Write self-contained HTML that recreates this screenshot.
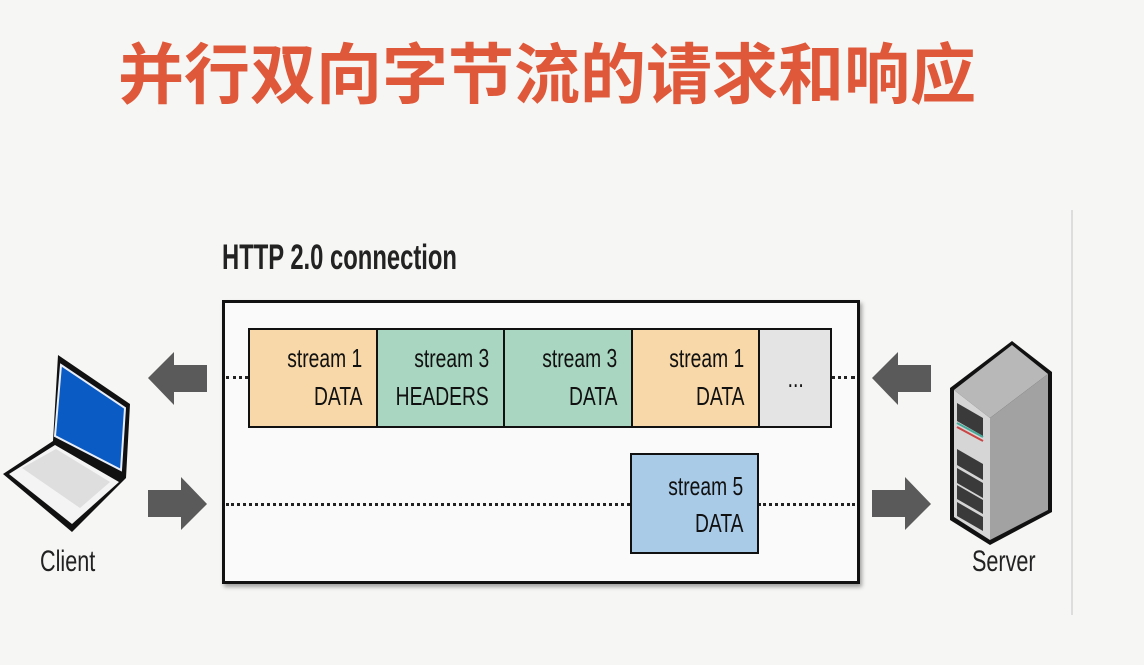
<!DOCTYPE html>
<html><head><meta charset="utf-8"><style>
body{margin:0;width:1144px;height:665px;background:#f6f6f4;position:relative;overflow:hidden;font-family:"Liberation Sans",sans-serif}
.t{position:absolute;left:118px;top:22px;white-space:nowrap;font:bold 66px "Liberation Sans","Noto Sans CJK SC",sans-serif;color:#e0583a}
.n{position:absolute;white-space:nowrap;transform-origin:0 0;color:#222}
.box{position:absolute;left:222px;top:300px;width:632px;height:278px;border:3px solid #111;box-shadow:2px 3px 4px rgba(0,0,0,.35);background:#fafafa}
.f{position:absolute;border:2px solid #111;box-sizing:border-box;font-size:26px;color:#111;line-height:37px}
.f span{position:absolute;right:14px;text-align:right;white-space:nowrap;transform-origin:100% 0;transform:scaleX(.74)}
.d{position:absolute;height:0;border-top:3px dotted #222}
</style></head><body>
<div class="t">并行双向字节流的请求和响应</div>
<div class="n" style="left:222px;top:238px;font-size:35px;font-weight:bold;transform:scaleX(.68)">HTTP 2.0 connection</div>
<div style="position:absolute;left:1071px;top:210px;width:2px;height:405px;background:#ddd"></div>
<div class="box"></div>
<div class="d" style="left:226px;top:376px;width:22px"></div>
<div class="d" style="left:831px;top:376px;width:24px"></div>
<div class="d" style="left:226px;top:503px;width:404px"></div>
<div class="d" style="left:758px;top:503px;width:97px"></div>
<div class="f" style="left:248px;top:328px;width:130px;height:100px;background:#f8d8a8"><span style="top:10px">stream 1</span><span style="top:48px">DATA</span></div>
<div class="f" style="left:376px;top:328px;width:129px;height:100px;background:#a9d6c1"><span style="top:10px">stream 3</span><span style="top:48px">HEADERS</span></div>
<div class="f" style="left:503px;top:328px;width:130px;height:100px;background:#a9d6c1"><span style="top:10px">stream 3</span><span style="top:48px">DATA</span></div>
<div class="f" style="left:631px;top:328px;width:129px;height:100px;background:#f8d8a8"><span style="top:10px">stream 1</span><span style="top:48px">DATA</span></div>
<div class="f" style="left:758px;top:328px;width:74px;height:100px;background:#e4e4e4"><span style="top:30px;right:26px">...</span></div>
<div class="f" style="left:630px;top:453px;width:129px;height:101px;background:#a9cbe8"><span style="top:13px">stream 5</span><span style="top:50px">DATA</span></div>
<div class="n" style="left:40px;top:545px;font-size:30px;transform:scaleX(.72)">Client</div>
<div class="n" style="left:972px;top:545px;font-size:30px;transform:scaleX(.72)">Server</div>
<svg width="1144" height="665" style="position:absolute;left:0;top:0">
<g fill="#5a5a5a">
<polygon points="207,365 174,365 174,352 148,378 174,405 174,392 207,392"/>
<polygon points="148,490 181,490 181,477 207,504 181,530 181,517 148,517"/>
<polygon points="931,365 898,365 898,352 872,378 898,405 898,392 931,392"/>
<polygon points="872,490 905,490 905,477 931,504 905,530 905,517 872,517"/>
</g>
<polygon points="3,474 53,441 58,355 130,404 126,478 72,532" fill="#111"/>
<polygon points="61,365 125,408 121,470 55,436" fill="#0a5bc4" stroke="#e8eefa" stroke-width="2"/>
<polygon points="9,474 55,445 119,482 72,524" fill="#f4f4f4"/>
<polygon points="22,468 56,449 110,482 80,508" fill="#dedede"/>
<polygon points="950,388 1012,341 1052,372 1052,512 990,545 950,520" fill="#111"/>
<polygon points="954,390 1012,345 1048,374 990,418" fill="#b8b8b8"/>
<polygon points="990,418 1048,374 1048,510 990,540" fill="#a2a2a2"/>
<polygon points="954,390 990,418 990,540 954,517" fill="#d6d6d6"/>
<g fill="#3a3a3a">
<polygon points="957,403 983,418 983,436 957,421"/>
<polygon points="957,449 983,464 983,480 957,465"/>
<polygon points="957,468 983,483 983,498 957,483"/>
<polygon points="957,485 983,500 983,514 957,499"/>
<polygon points="957,502 983,517 983,531 957,516"/>
</g>
<line x1="957" y1="427" x2="983" y2="441" stroke="#c44" stroke-width="2"/>
<line x1="957" y1="423" x2="983" y2="437" stroke="#4a9" stroke-width="2"/>
</svg>
</body></html>
